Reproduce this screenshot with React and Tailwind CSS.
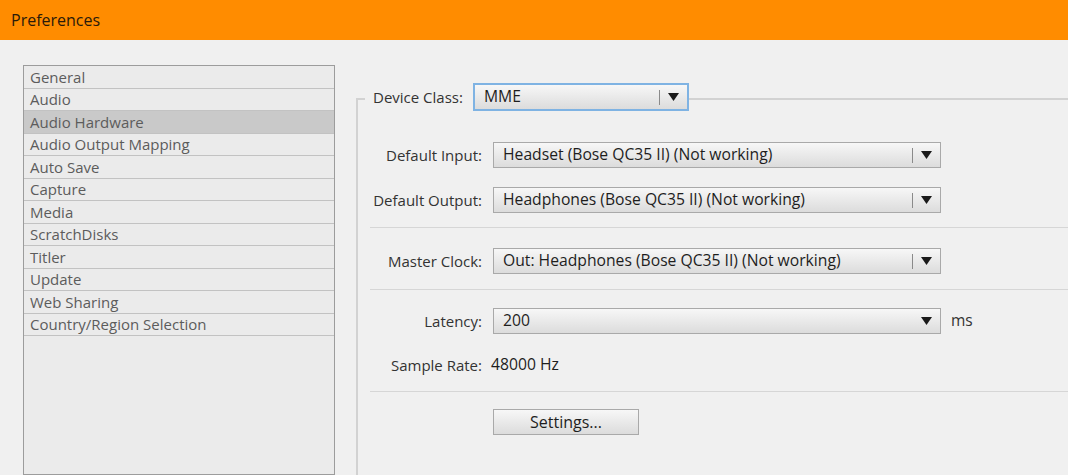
import React from "react";

const items = [
  "General",
  "Audio",
  "Audio Hardware",
  "Audio Output Mapping",
  "Auto Save",
  "Capture",
  "Media",
  "ScratchDisks",
  "Titler",
  "Update",
  "Web Sharing",
  "Country/Region Selection",
];

const Arrow = () => (
  <svg width="11" height="8" viewBox="0 0 11 8" className="block">
    <path d="M0 0 L11 0 L5.5 8 Z" fill="#1a1a1a" />
  </svg>
);

const Select = ({ value, width, divider = true, focused = false }) => (
  <div
    className={`flex items-center ${width} ${
      focused
        ? "h-[28px] border-2 border-[#7fb3e3]"
        : "h-[26px] border border-[#a9a9a9]"
    } bg-gradient-to-b from-[#f7f7f7] to-[#dcdcdc]`}
  >
    <span className="flex-1 pl-[9px] text-[15.7px] text-[#1e1e1e] whitespace-nowrap">
      {value}
    </span>
    {divider && <div className="w-px h-[15px] bg-[#8a8a8a] mr-[8px]" />}
    <div className="mr-[8px]">
      <Arrow />
    </div>
  </div>
);

const Row = ({ label, children }) => (
  <div className="flex items-center">
    <div className="w-[112px] text-right text-[15px] text-[#333] whitespace-nowrap">
      {label}
    </div>
    <div className="ml-[11px] flex items-center">{children}</div>
  </div>
);

const Sep = ({ className }) => <div className={`h-px bg-[#d6d6d6] ${className}`} />;

export default function App() {
  return (
    <div
      className="w-[1068px] h-[475px] overflow-hidden bg-[#f0f0f0] flex flex-col"
      style={{ fontFamily: '"Open Sans", "Noto Sans", sans-serif' }}
    >
      <div className="h-[40px] shrink-0 bg-[#ff8c00] flex items-center pl-[11px]">
        <span className="text-[16px] text-[#2a1a0a]">Preferences</span>
      </div>

      <div className="flex flex-1 min-h-0">
        {/* category list */}
        <div className="ml-[23px] mt-[25px] w-[312px] border border-[#9c9c9c] bg-[#ebebeb] flex flex-col">
          {items.map((item) => (
            <div
              key={item}
              className={`h-[22.5px] shrink-0 border-b border-[#c2c2c2] pl-[6px] flex items-center text-[15px] text-[#5c5c5c] whitespace-nowrap ${
                item === "Audio Hardware" ? "bg-[#c9c9c9]" : ""
              }`}
            >
              {item}
            </div>
          ))}
        </div>

        {/* audio hardware group */}
        <div className="ml-[21px] mt-[43px] flex-1 flex flex-col">
          <div className="flex items-center h-[28px]">
            <div className="w-[9px] h-[13px] self-end border-l-2 border-t-2 border-[#d2d2d2]" />
            <span className="ml-[8px] mr-[10px] text-[15px] text-[#333] whitespace-nowrap">
              Device Class:
            </span>
            <Select value="MME" width="w-[216px]" focused />
            <div className="flex-1 h-[2px] bg-[#d2d2d2] mt-[3px]" />
          </div>

          <div className="flex-1 border-l-2 border-[#d2d2d2] pl-[12px] pt-[31px]">
            <Row label="Default Input:">
              <Select value="Headset (Bose QC35 II) (Not working)" width="w-[448px]" />
            </Row>
            <div className="mt-[19px]">
              <Row label="Default Output:">
                <Select value="Headphones (Bose QC35 II) (Not working)" width="w-[448px]" />
              </Row>
            </div>
            <Sep className="mt-[14px]" />
            <div className="mt-[20px]">
              <Row label="Master Clock:">
                <Select
                  value="Out: Headphones (Bose QC35 II) (Not working)"
                  width="w-[448px]"
                />
              </Row>
            </div>
            <Sep className="mt-[15px]" />
            <div className="mt-[18px]">
              <Row label="Latency:">
                <Select value="200" width="w-[448px]" divider={false} />
                <span className="ml-[10px] text-[15.5px] text-[#333]">ms</span>
              </Row>
            </div>
            <div className="mt-[18px] h-[26px] flex items-center">
              <Row label="Sample Rate:">
                <span className="-ml-[2px] text-[15.7px] text-[#1e1e1e]">48000 Hz</span>
              </Row>
            </div>
            <Sep className="mt-[13px]" />
            <div className="mt-[17px] ml-[123px]">
              <button className="w-[146px] h-[26px] border border-[#a9a9a9] bg-gradient-to-b from-[#f7f7f7] to-[#dcdcdc] text-[16px] text-[#1e1e1e]">
                Settings...
              </button>
            </div>
          </div>
        </div>
      </div>
    </div>
  );
}
